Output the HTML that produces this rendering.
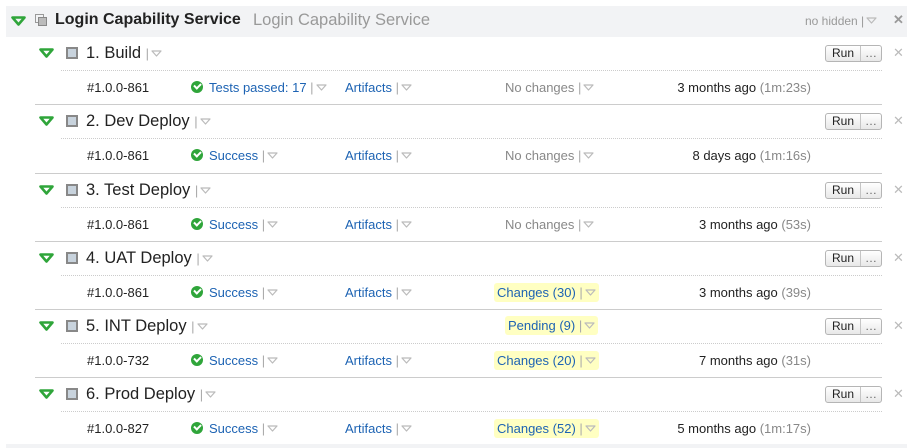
<!DOCTYPE html>
<html><head><style>
body{margin:0;width:919px;height:448px;background:#fff;font-family:"Liberation Sans",sans-serif;position:relative;overflow:hidden}
.hdr{position:absolute;left:6px;top:6px;width:901px;height:31px;background:#f2f3f5}
.a{position:absolute;white-space:nowrap}
.tri{position:absolute;width:15px;height:10px}
.sq{position:absolute;width:8px;height:8px;border:2px solid #888;background:#c8d3dd}
.dd{color:#aaa;font-size:13px}
.dd svg{vertical-align:1px;margin-left:2px}
.run{position:absolute;left:825px;height:15px;border:1px solid #b5b5b5;border-radius:3px;background:linear-gradient(#fff,#e8e8e8);font-size:12px;color:#222}
.run span{display:inline-block;padding:0 6px;line-height:15px}
.run b{font-weight:normal;display:inline-block;border-left:1px solid #c5c5c5;padding:0 4px;line-height:15px;color:#666}
.x{position:absolute;left:893px;color:#bbb;font-size:13px}
.t{font-size:16.5px;color:#222}
.s{font-size:13px}
.blue{color:#1d63b3}
.chk{display:inline-block;width:12px;height:12px;border-radius:50%;background:#2fa53a;vertical-align:-1px;margin-right:6px;position:relative}
.chk:after{content:"";position:absolute;left:3px;top:2px;width:5px;height:3px;border-left:2px solid #fff;border-bottom:2px solid #fff;transform:rotate(-45deg)}
.yel{background:#ffffc2;border-radius:3px;padding:2px 3px}
.dot{position:absolute;left:61px;width:821px;border-top:1px dotted #ccc}
.sep{position:absolute;left:35px;width:847px;border-top:1px solid #ccc}
</style></head><body>
<svg width="0" height="0" style="position:absolute"><defs>
<symbol id="d" viewBox="0 0 11 7"><path d="M1 1 L10 1 L5.5 6 Z" fill="none" stroke="#bbb" stroke-width="1.2" stroke-linejoin="round"/></symbol>
<symbol id="g" viewBox="0 0 15 10"><path d="M1.5 1.5 L13.5 1.5 L7.5 8.5 Z" fill="none" stroke="#2fa53a" stroke-width="2.6" stroke-linejoin="round"/></symbol>
</defs></svg>
<div class="hdr"></div>
<svg class="tri" style="left:11px;top:16px"><use href="#g"/></svg>
<div class="a" style="left:35px;top:14px;width:7px;height:7px;border:1px solid #999"></div>
<div class="a" style="left:38px;top:17px;width:7px;height:7px;border:1px solid #888;background:#bbb"></div>
<div class="a" style="left:55px;top:11px;font-size:16px;font-weight:bold;color:#222">Login Capability Service</div>
<div class="a" style="left:253px;top:11px;font-size:16.5px;color:#999">Login Capability Service</div>
<div class="a dd" style="left:805px;top:14px;color:#999;font-size:12px">no hidden |<svg width="11" height="7"><use href="#d"/></svg></div>
<div class="a" style="left:893px;top:12px;color:#999;font-size:13px;font-weight:bold">✕</div>

<!-- Section 1 -->
<svg class="tri" style="left:39px;top:48px"><use href="#g"/></svg><div class="sq" style="left:66px;top:47px"></div>
<div class="a t" style="left:86px;top:44px">1. Build <span class="dd">|<svg width="11" height="7"><use href="#d"/></svg></span></div>
<div class="run" style="top:45px"><span>Run</span><b>…</b></div><div class="x" style="top:45px">✕</div>
<div class="dot" style="top:70px"></div>
<div class="a s" style="left:87px;top:80px;color:#222">#1.0.0-861</div>
<div class="a s blue" style="left:191px;top:80px"><span class="chk"></span>Tests passed: 17 <span class="dd">|<svg width="11" height="7"><use href="#d"/></svg></span></div>
<div class="a s blue" style="left:345px;top:80px">Artifacts <span class="dd">|<svg width="11" height="7"><use href="#d"/></svg></span></div>
<div class="a s" style="left:505px;top:80px;color:#888">No changes <span class="dd">|<svg width="11" height="7"><use href="#d"/></svg></span></div>
<div class="a s" style="right:108px;top:80px;color:#222">3 months ago <span style="color:#888">(1m:23s)</span></div>
<div class="sep" style="top:104px"></div>

<!-- Section 2 -->
<svg class="tri" style="left:39px;top:116px"><use href="#g"/></svg><div class="sq" style="left:66px;top:115px"></div>
<div class="a t" style="left:86px;top:112px">2. Dev Deploy <span class="dd">|<svg width="11" height="7"><use href="#d"/></svg></span></div>
<div class="run" style="top:113px"><span>Run</span><b>…</b></div><div class="x" style="top:113px">✕</div>
<div class="dot" style="top:138px"></div>
<div class="a s" style="left:87px;top:148px;color:#222">#1.0.0-861</div>
<div class="a s blue" style="left:191px;top:148px"><span class="chk"></span>Success <span class="dd">|<svg width="11" height="7"><use href="#d"/></svg></span></div>
<div class="a s blue" style="left:345px;top:148px">Artifacts <span class="dd">|<svg width="11" height="7"><use href="#d"/></svg></span></div>
<div class="a s" style="left:505px;top:148px;color:#888">No changes <span class="dd">|<svg width="11" height="7"><use href="#d"/></svg></span></div>
<div class="a s" style="right:108px;top:148px;color:#222">8 days ago <span style="color:#888">(1m:16s)</span></div>
<div class="sep" style="top:173px"></div>

<!-- Section 3 -->
<svg class="tri" style="left:39px;top:185px"><use href="#g"/></svg><div class="sq" style="left:66px;top:184px"></div>
<div class="a t" style="left:86px;top:181px">3. Test Deploy <span class="dd">|<svg width="11" height="7"><use href="#d"/></svg></span></div>
<div class="run" style="top:182px"><span>Run</span><b>…</b></div><div class="x" style="top:182px">✕</div>
<div class="dot" style="top:207px"></div>
<div class="a s" style="left:87px;top:217px;color:#222">#1.0.0-861</div>
<div class="a s blue" style="left:191px;top:217px"><span class="chk"></span>Success <span class="dd">|<svg width="11" height="7"><use href="#d"/></svg></span></div>
<div class="a s blue" style="left:345px;top:217px">Artifacts <span class="dd">|<svg width="11" height="7"><use href="#d"/></svg></span></div>
<div class="a s" style="left:505px;top:217px;color:#888">No changes <span class="dd">|<svg width="11" height="7"><use href="#d"/></svg></span></div>
<div class="a s" style="right:108px;top:217px;color:#222">3 months ago <span style="color:#888">(53s)</span></div>
<div class="sep" style="top:241px"></div>

<!-- Section 4 -->
<svg class="tri" style="left:39px;top:253px"><use href="#g"/></svg><div class="sq" style="left:66px;top:252px"></div>
<div class="a t" style="left:86px;top:249px">4. UAT Deploy <span class="dd">|<svg width="11" height="7"><use href="#d"/></svg></span></div>
<div class="run" style="top:250px"><span>Run</span><b>…</b></div><div class="x" style="top:250px">✕</div>
<div class="dot" style="top:275px"></div>
<div class="a s" style="left:87px;top:285px;color:#222">#1.0.0-861</div>
<div class="a s blue" style="left:191px;top:285px"><span class="chk"></span>Success <span class="dd">|<svg width="11" height="7"><use href="#d"/></svg></span></div>
<div class="a s blue" style="left:345px;top:285px">Artifacts <span class="dd">|<svg width="11" height="7"><use href="#d"/></svg></span></div>
<div class="a s blue" style="left:494px;top:285px"><span class="yel">Changes (30) <span class="dd">|<svg width="11" height="7"><use href="#d"/></svg></span></span></div>
<div class="a s" style="right:108px;top:285px;color:#222">3 months ago <span style="color:#888">(39s)</span></div>
<div class="sep" style="top:309px"></div>

<!-- Section 5 -->
<svg class="tri" style="left:39px;top:321px"><use href="#g"/></svg><div class="sq" style="left:66px;top:320px"></div>
<div class="a t" style="left:86px;top:317px">5. INT Deploy <span class="dd">|<svg width="11" height="7"><use href="#d"/></svg></span></div>
<div class="a s blue" style="left:505px;top:318px"><span class="yel">Pending (9) <span class="dd">|<svg width="11" height="7"><use href="#d"/></svg></span></span></div>
<div class="run" style="top:318px"><span>Run</span><b>…</b></div><div class="x" style="top:318px">✕</div>
<div class="dot" style="top:343px"></div>
<div class="a s" style="left:87px;top:353px;color:#222">#1.0.0-732</div>
<div class="a s blue" style="left:191px;top:353px"><span class="chk"></span>Success <span class="dd">|<svg width="11" height="7"><use href="#d"/></svg></span></div>
<div class="a s blue" style="left:345px;top:353px">Artifacts <span class="dd">|<svg width="11" height="7"><use href="#d"/></svg></span></div>
<div class="a s blue" style="left:494px;top:353px"><span class="yel">Changes (20) <span class="dd">|<svg width="11" height="7"><use href="#d"/></svg></span></span></div>
<div class="a s" style="right:108px;top:353px;color:#222">7 months ago <span style="color:#888">(31s)</span></div>
<div class="sep" style="top:377px"></div>

<!-- Section 6 -->
<svg class="tri" style="left:39px;top:389px"><use href="#g"/></svg><div class="sq" style="left:66px;top:388px"></div>
<div class="a t" style="left:86px;top:385px">6. Prod Deploy <span class="dd">|<svg width="11" height="7"><use href="#d"/></svg></span></div>
<div class="run" style="top:386px"><span>Run</span><b>…</b></div><div class="x" style="top:386px">✕</div>
<div class="dot" style="top:411px"></div>
<div class="a s" style="left:87px;top:421px;color:#222">#1.0.0-827</div>
<div class="a s blue" style="left:191px;top:421px"><span class="chk"></span>Success <span class="dd">|<svg width="11" height="7"><use href="#d"/></svg></span></div>
<div class="a s blue" style="left:345px;top:421px">Artifacts <span class="dd">|<svg width="11" height="7"><use href="#d"/></svg></span></div>
<div class="a s blue" style="left:494px;top:421px"><span class="yel">Changes (52) <span class="dd">|<svg width="11" height="7"><use href="#d"/></svg></span></span></div>
<div class="a s" style="right:108px;top:421px;color:#222">5 months ago <span style="color:#888">(1m:17s)</span></div>
<div class="a" style="left:6px;top:444px;width:901px;height:4px;background:#f2f3f5"></div>
</body></html>
